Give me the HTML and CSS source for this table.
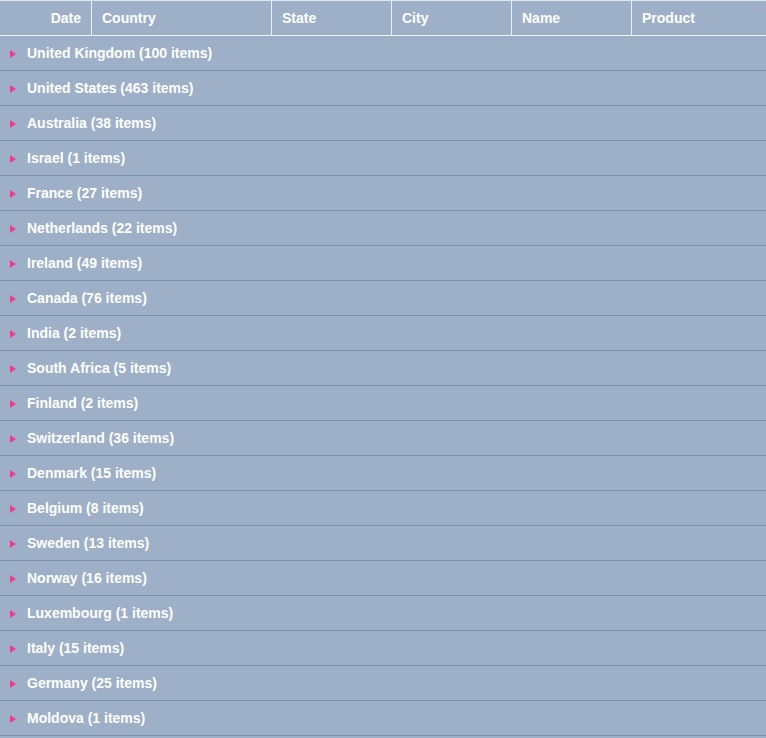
FILE: index.html
```html
<html lang="en">
  <head>
    <meta charset="UTF-8" />
    <title>Grouped Grid</title>
    <link rel="stylesheet" href="styles.css">
  </head>
  <body>
    <div class="grid">
      <div class="grid-head">
        <div class="col col-date">Date</div>
        <div class="col col-country">Country</div>
        <div class="col col-mid">State</div>
        <div class="col col-mid">City</div>
        <div class="col col-mid">Name</div>
        <div class="col col-product">Product</div>
      </div>
      <div class="group"><span class="caret"></span>United Kingdom (100 items)</div>
      <div class="group"><span class="caret"></span>United States (463 items)</div>
      <div class="group"><span class="caret"></span>Australia (38 items)</div>
      <div class="group"><span class="caret"></span>Israel (1 items)</div>
      <div class="group"><span class="caret"></span>France (27 items)</div>
      <div class="group"><span class="caret"></span>Netherlands (22 items)</div>
      <div class="group"><span class="caret"></span>Ireland (49 items)</div>
      <div class="group"><span class="caret"></span>Canada (76 items)</div>
      <div class="group"><span class="caret"></span>India (2 items)</div>
      <div class="group"><span class="caret"></span>South Africa (5 items)</div>
      <div class="group"><span class="caret"></span>Finland (2 items)</div>
      <div class="group"><span class="caret"></span>Switzerland (36 items)</div>
      <div class="group"><span class="caret"></span>Denmark (15 items)</div>
      <div class="group"><span class="caret"></span>Belgium (8 items)</div>
      <div class="group"><span class="caret"></span>Sweden (13 items)</div>
      <div class="group"><span class="caret"></span>Norway (16 items)</div>
      <div class="group"><span class="caret"></span>Luxembourg (1 items)</div>
      <div class="group"><span class="caret"></span>Italy (15 items)</div>
      <div class="group"><span class="caret"></span>Germany (25 items)</div>
      <div class="group"><span class="caret"></span>Moldova (1 items)</div>
    </div>
  </body>
</html>
```

FILE: styles.css
```css
body {
  margin: 0;
  background: #9db0c8;
  font-family: "Liberation Sans", Arial, sans-serif;
  font-size: 14px;
  font-weight: bold;
  color: #fff;
  height: 738px;
  overflow: hidden;
}
.grid {
  background: #9db0c8;
}
.grid-head {
  display: flex;
  height: 34px;
  border-top: 1px solid #dfe6ef;
  border-bottom: 1px solid #eef2f7;
}
.col {
  box-sizing: border-box;
  display: flex;
  align-items: center;
  padding: 0 10px;
  border-right: 1px solid #eef2f7;
}
.col-date {
  width: 92px;
  justify-content: flex-end;
}
.col-country {
  width: 180px;
}
.col-mid {
  width: 120px;
}
.col-product {
  flex: 1;
  border-right: none;
}
.group {
  display: flex;
  align-items: center;
  height: 34px;
  padding-left: 10px;
  border-bottom: 1px solid #7f8fa6;
}
.caret {
  width: 0;
  height: 0;
  border-top: 4.5px solid transparent;
  border-bottom: 4.5px solid transparent;
  border-left: 6px solid #ee3b8f;
  margin-right: 11px;
  margin-top: 1px;
}
```
